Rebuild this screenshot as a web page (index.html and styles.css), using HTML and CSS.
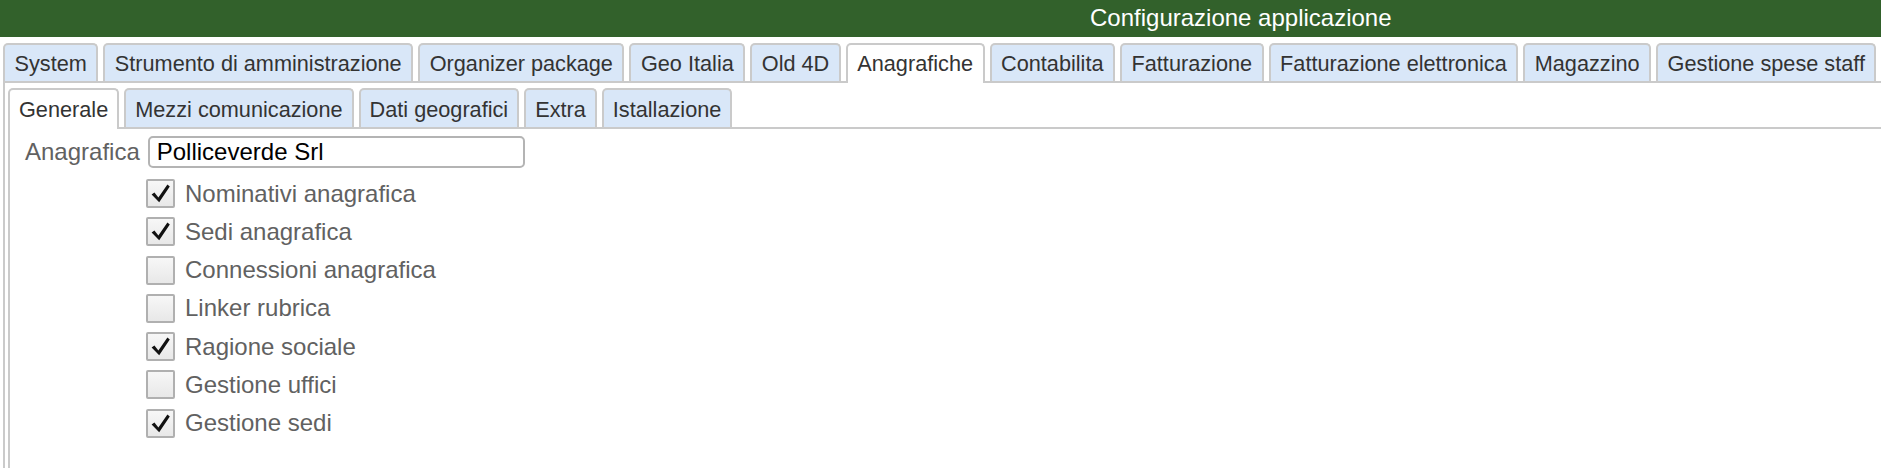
FILE: index.html
```html
<!DOCTYPE html>
<html lang="it">
<head>
<meta charset="utf-8">
<title>Configurazione applicazione</title>
<link rel="stylesheet" href="styles.css">
</head>
<body>
<div class="header">Configurazione applicazione</div>
<div class="tabs outer-tabs">
  <div class="tab">System</div>
  <div class="tab">Strumento di amministrazione</div>
  <div class="tab">Organizer package</div>
  <div class="tab">Geo Italia</div>
  <div class="tab">Old 4D</div>
  <div class="tab active">Anagrafiche</div>
  <div class="tab">Contabilita</div>
  <div class="tab">Fatturazione</div>
  <div class="tab">Fatturazione elettronica</div>
  <div class="tab">Magazzino</div>
  <div class="tab">Gestione spese staff</div>
</div>
<div class="panel outer-panel">
  <div class="tabs inner-tabs">
    <div class="tab active">Generale</div>
    <div class="tab">Mezzi comunicazione</div>
    <div class="tab">Dati geografici</div>
    <div class="tab">Extra</div>
    <div class="tab">Istallazione</div>
  </div>
  <div class="panel inner-panel">
    <div class="field">
      <span class="field-label">Anagrafica</span>
      <input class="text-input" type="text" value="Polliceverde Srl">
    </div>
    <div class="checks">
      <div class="check-row"><span class="box checked"><svg viewBox="0 0 25 25"><path d="M3.6 13.6 L6.4 11.6 L10.4 16.4 L19.4 3.6 L21.8 5.4 L11.2 21.2 Z"/></svg></span><span class="check-label">Nominativi anagrafica</span></div>
      <div class="check-row"><span class="box checked"><svg viewBox="0 0 25 25"><path d="M3.6 13.6 L6.4 11.6 L10.4 16.4 L19.4 3.6 L21.8 5.4 L11.2 21.2 Z"/></svg></span><span class="check-label">Sedi anagrafica</span></div>
      <div class="check-row"><span class="box"></span><span class="check-label">Connessioni anagrafica</span></div>
      <div class="check-row"><span class="box"></span><span class="check-label">Linker rubrica</span></div>
      <div class="check-row"><span class="box checked"><svg viewBox="0 0 25 25"><path d="M3.6 13.6 L6.4 11.6 L10.4 16.4 L19.4 3.6 L21.8 5.4 L11.2 21.2 Z"/></svg></span><span class="check-label">Ragione sociale</span></div>
      <div class="check-row"><span class="box"></span><span class="check-label">Gestione uffici</span></div>
      <div class="check-row"><span class="box checked"><svg viewBox="0 0 25 25"><path d="M3.6 13.6 L6.4 11.6 L10.4 16.4 L19.4 3.6 L21.8 5.4 L11.2 21.2 Z"/></svg></span><span class="check-label">Gestione sedi</span></div>
    </div>
  </div>
</div>
</body>
</html>
```
FILE: styles.css
```css
html, body {
  margin: 0;
  padding: 0;
  height: 100%;
}
body {
  display: flex;
  flex-direction: column;
  height: 468px;
  overflow: hidden;
  background: #ffffff;
  font-family: "Liberation Sans", Arial, Helvetica, sans-serif;
  color: #333333;
}
.header {
  flex: none;
  height: 37px;
  line-height: 35px;
  background: #32612b;
  color: #ffffff;
  font-size: 24px;
  padding-left: 1090px;
  box-sizing: border-box;
  white-space: nowrap;
}
.tabs {
  display: flex;
  align-items: flex-end;
  flex: none;
}
.tab {
  position: relative;
  box-sizing: border-box;
  border: 2px solid #cacaca;
  border-bottom: none;
  border-radius: 5px 5px 0 0;
  background: #d9e7f8;
  color: #333333;
  font-size: 21.7px;
  padding: 2px 9.5px 0 9.5px;
  margin-right: 5px;
  white-space: nowrap;
}
.tab.active {
  background: #ffffff;
  margin-bottom: -2px;
  padding-bottom: 2px;
  z-index: 1;
}
.outer-tabs {
  padding: 6px 0 0 3px;
}
.outer-tabs .tab {
  height: 38px;
  line-height: 34px;
}
.outer-tabs .tab.active {
  height: 40px;
}
.panel {
  border-top: 2px solid #cacaca;
  border-left: 2px solid #cacaca;
  flex: 1;
  display: flex;
  flex-direction: column;
}
.outer-panel {
  margin-left: 3px;
  padding: 5px 0 0 3px;
}
.inner-tabs .tab {
  height: 39px;
  line-height: 35px;
  padding: 2px 9px 0 9px;
}
.inner-tabs .tab.active {
  height: 41px;
}
.inner-panel {
  padding: 7px 0 0 15px;
}
.field {
  display: flex;
  align-items: center;
  gap: 8px;
}
.field-label {
  font-size: 24px;
  color: #616161;
}
.text-input {
  box-sizing: border-box;
  width: 377px;
  height: 32px;
  border: 2px solid #b4b4b4;
  border-radius: 5px;
  padding: 0 7px;
  margin: 0;
  font-family: "Liberation Sans", Arial, Helvetica, sans-serif;
  font-size: 24px;
  color: #000000;
  background: #ffffff;
  outline: none;
}
.checks {
  display: flex;
  flex-direction: column;
  gap: 9.3px;
  margin: 11px 0 0 121px;
}
.check-row {
  display: flex;
  align-items: center;
  gap: 10px;
  height: 29px;
}
.box {
  box-sizing: border-box;
  width: 29px;
  height: 29px;
  border: 2px solid #b0b0b0;
  border-radius: 2px;
  background: linear-gradient(#f7f7f7, #e8e8e8);
  display: flex;
}
.box svg {
  width: 25px;
  height: 25px;
}
.box svg path {
  fill: #111111;
}
.check-label {
  font-size: 24px;
  color: #616161;
  white-space: nowrap;
}
```
